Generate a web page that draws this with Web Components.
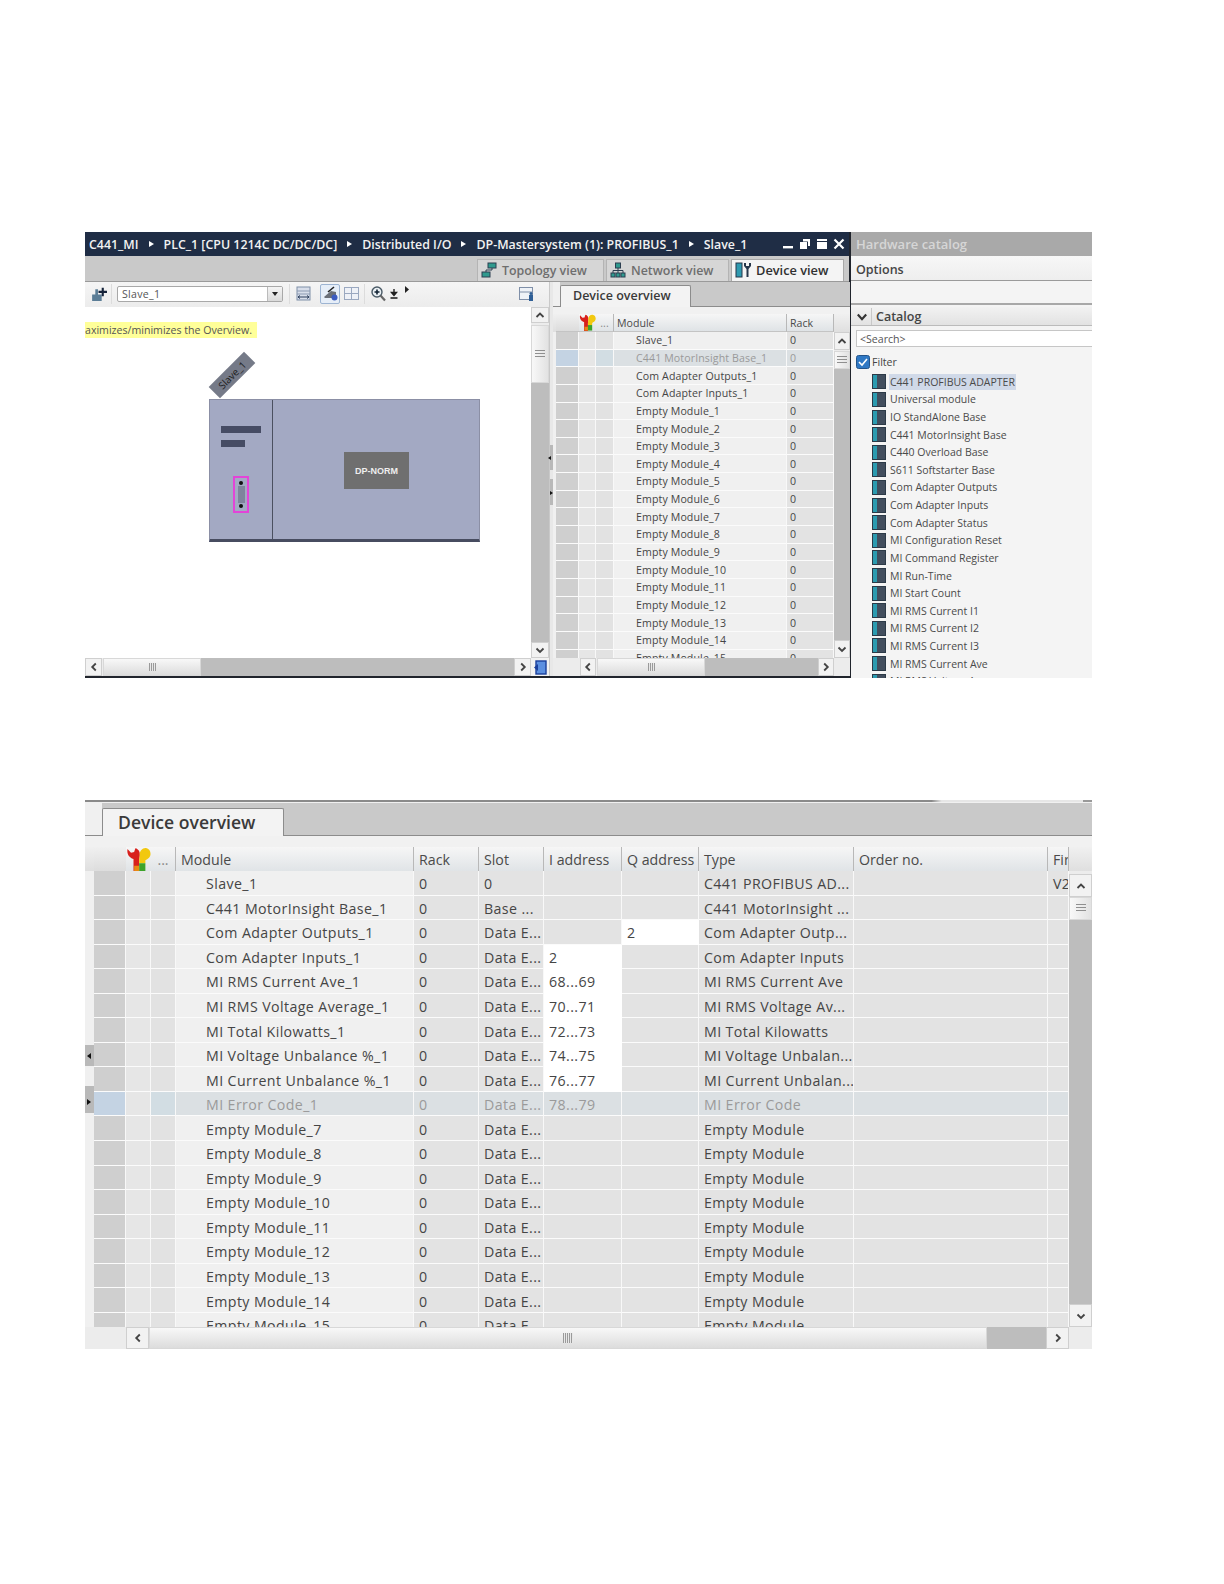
<!DOCTYPE html>
<html>
<head>
<meta charset="utf-8">
<title>Device overview</title>
<style>
    html, body { margin: 0; background: #fff; }
    body { padding: 232px 0 0 85px; height: 1352px; font-family: "Open Sans", "Liberation Sans", sans-serif; overflow: hidden; }
    tia-editor { margin-bottom: 122px; }
    device-table.small {
        --cols: 23px 17px 18px 173px 47px;
        --gutter: 3px;
        --tab-h: 25px; --strip-h: 7px; --head-h: 18px; --row-h: 17.65px; --foot-h: 18px;
        --body-h: 326px; --font: 10.6px; --head-font: 10.6px; --tab-font: 12.5px;
        --tab-left: 7px; --tab-w: 131px; --tab-top: 3px; --tab-pad: 12px; --indent: 22px; --pad: 3px; --spacing: .12px;
        --cell-top: 0px;
        --vbar: 16px;
        width: 297px;
    }
    device-table.large {
        --cols: 32px 25px 25px 238px 65px 65px 78px 77px 155px 194px 21px;
        --gutter: 9px;
        --tab-h: 33px; --strip-h: 11px; --head-h: 24px; --row-h: 24.55px; --foot-h: 22px;
        --body-h: 456px; --font: 14.2px; --head-font: 14.2px; --tab-font: 17.6px;
        --tab-left: 17px; --tab-w: 182px; --tab-top: 5px; --tab-pad: 15px; --indent: 30px; --pad: 5px; --spacing: .4px;
        --cell-top: 2px;
        --vbar: 23px;
        width: 1007px;
        border-top: 2px solid;
        border-image: linear-gradient(90deg, #8a8a8a 84%, #e6e6e6 85%, #e6e6e6 99%, #999 99%) 1;
        padding-top: 1px;
    }
</style>
</head>
<body>

<tia-editor>
    <device-table class="small" id="small" slot="overview">
        <device-row slot="head" header cells="|||Module|Rack"></device-row>
        <scroll-bar slot="vbar" orient="v" btn="18" offset="1" thumb="18" glyph="lines"></scroll-bar>
        <scroll-bar slot="hbar" orient="h" btn="16" pre="27" post="16" offset="1" thumb="108"></scroll-bar>
    </device-table>
</tia-editor>

<device-table class="large" id="large" handles>
    <device-row slot="head" header cells="|||Module|Rack|Slot|I address|Q address|Type|Order no.|Fir"></device-row>
    <scroll-bar slot="vbar" orient="v" btn="23" offset="0" thumb="23" lead="3" glyph="lines"></scroll-bar>
    <scroll-bar slot="hbar" orient="h" btn="23" pre="41" post="23" offset="0" thumb="838" glyph="long"></scroll-bar>
</device-table>

<script>
    let scrollTemplate = document.createElement('template');
    scrollTemplate.innerHTML = `
    <style>
        :host { display: flex; background: #ececec; }
        :host([orient=v]) { flex-direction: column; width: var(--vbar); flex: none; }
        :host([orient=h]) { height: 100%; flex: 1; }
        .pre, .post { flex: none; background: #ececec; }
        .bar { flex: 1; display: flex; min-width: 0; min-height: 0; }
        :host([orient=v]) .bar { flex-direction: column; }
        .btn { flex: none; display: flex; align-items: center; justify-content: center; background: #f2f2f2; box-sizing: border-box; border: 1px solid #cfcfcf; }
        .btn svg { width: 10px; height: 10px; }
        .thumb { flex: none; display: flex; align-items: center; justify-content: center; box-sizing: border-box; border: 1px solid #d8d8d8; }
        :host([orient=h]) .thumb { background: linear-gradient(#f8f8f8, #dcdcdc); }
        :host([orient=v]) .thumb { background: linear-gradient(90deg, #f8f8f8, #e2e2e2); }
        .track { flex: 1; background: #bdbdbd; }
        .grip { width: 7px; height: 8px; background: repeating-linear-gradient(90deg, #9a9a9a 0 1px, #e8e8e8 1px 2px); }
        :host([glyph=lines]) .grip { width: 10px; height: 9px; background: repeating-linear-gradient(#8f8f8f 0 1px, transparent 1px 3px); }
        :host([glyph=long]) .grip { width: 10px; height: 10px; }
    </style>
    <div class="pre"></div>
    <div class="bar">
        <div class="btn first"></div>
        <div class="offset"></div>
        <div class="thumb"><div class="grip"></div></div>
        <div class="track"></div>
        <div class="btn last"></div>
    </div>
    <div class="post"><slot></slot></div>
    `;

    let chevrons = {
        up: '<path d="M1.5 7 5 3.5 8.5 7"/>',
        down: '<path d="M1.5 3.5 5 7 8.5 3.5"/>',
        left: '<path d="M6.8 1.5 3.2 5 6.8 8.5"/>',
        right: '<path d="M3.2 1.5 6.8 5 3.2 8.5"/>'
    };
    let chevron = name => `<svg viewBox="0 0 10 10" fill="none" stroke="#444" stroke-width="1.8">${chevrons[name]}</svg>`;

    customElements.define('scroll-bar', class extends HTMLElement {
        constructor() {
            super();
            this.attachShadow({mode: 'open'}).appendChild(scrollTemplate.content.cloneNode(true));
        }

        connectedCallback() {
            let s = this.shadowRoot;
            let vertical = this.getAttribute('orient') == 'v';
            let size = vertical ? 'height' : 'width';
            let btn = this.getAttribute('btn') + 'px';
            s.querySelector('.first').style[size] = btn;
            s.querySelector('.last').style[size] = btn;
            s.querySelector('.first').innerHTML = chevron(vertical ? 'up' : 'left');
            s.querySelector('.last').innerHTML = chevron(vertical ? 'down' : 'right');
            s.querySelector('.offset').style[size] = this.getAttribute('offset') + 'px';
            s.querySelector('.thumb').style[size] = this.getAttribute('thumb') + 'px';
            s.querySelector('.pre').style[size] = (this.getAttribute('pre') || this.getAttribute('lead') || 0) + 'px';
            s.querySelector('.post').style[size] = (this.getAttribute('post') || 0) + 'px';
        }
    });

    let rowTemplate = document.createElement('template');
    rowTemplate.innerHTML = `
    <style>
        :host { display: grid; grid-template-columns: var(--cols); height: var(--row-h); font-size: var(--font); letter-spacing: var(--spacing); color: #454545; }
        :host([header]) { height: var(--head-h); font-size: var(--head-font); letter-spacing: 0; color: #4a4a4a; flex: 1; }
        .cell { box-sizing: border-box; background: #e3e3e3; border-right: 1px solid #f8f8f8; border-bottom: 1px solid #fbfbfb; padding-left: var(--pad); padding-top: var(--cell-top); white-space: nowrap; overflow: hidden; display: flex; align-items: center; min-width: 0; }
        .c0 { background: #cfcfcf; padding-left: 0; }
        .c1 { background: #e6e6e6; padding-left: 0; }
        .c2 { background: #e2e2e2; padding-left: 0; }
        .c3 { background: #f0f0f0; padding-left: var(--indent); }
        .edit { background: #fff; border-right-color: #fff; border-bottom-color: #fff; }
        :host([selected]) { color: #9a9a9a; }
        :host([selected]) .cell { background: #dbe0e3; }
        :host([selected]) .c0 { background: #c4d3e3; }
        :host([selected]) .c1 { background: #e6e6e6; }
        :host([selected]) .c2 { background: #d2dde3; }
        :host([header]) .cell { background: linear-gradient(#f6f6f6, #dfe3e6); border-right: 1px solid #b8b8b8; border-bottom: 1px solid #c4c4c4; padding-top: 0; }
        :host([header]) .c0 { background: linear-gradient(#f0f0f0, #dcdcdc); border-right: 0; }
        :host([header]) .c1 { border-right: 0; justify-content: center; overflow: visible; }
        :host([header]) .c2 { justify-content: center; color: #888; }
        :host([header]) .c3 { padding-left: var(--pad); }
        .wrench { height: 100%; width: auto; flex: none; }
    </style>
    `;

    customElements.define('device-row', class extends HTMLElement {
        constructor() {
            super();
            this.attachShadow({mode: 'open'}).appendChild(rowTemplate.content.cloneNode(true));
        }

        connectedCallback() {
            let header = this.hasAttribute('header');
            this.getAttribute('cells').split('|').forEach((text, i) => {
                let cell = document.createElement('div');
                cell.className = 'cell c' + i;
                if (text[0] == '*') {
                    cell.classList.add('edit');
                    text = text.slice(1);
                }
                cell.textContent = text;
                if (header && i == 1) {
                    cell.innerHTML = `<svg class="wrench" viewBox="0 0 20 20">
                        <path d="M6 20V9.5C2.5 8.5 .5 5.5 1.2 1.5L4 4.5 6.5 4 7.5 1C10 1.5 11.5 4 11 7L10.5 11V20Z" fill="#d8201c"/>
                        <path d="M10.5 11 11 7C10.5 3.5 13 .5 16 .8 19 1.2 20.3 4.5 19.3 7.2 18.6 9 17 9.8 15.5 10.5V13H10.5Z" fill="#f2c80f"/>
                        <path d="M10.5 13H15.5V19.5H10.5Z" fill="#3da32a"/>
                        <path d="M6.5 15H10.5V19.5H6.5Z" fill="#e88a12"/>
                    </svg>`;
                }
                if (header && i == 2) cell.textContent = '...';
                this.shadowRoot.appendChild(cell);
            });
        }
    });

    let tableTemplate = document.createElement('template');
    tableTemplate.innerHTML = `
    <style>
        :host { display: block; position: relative; font-family: "Open Sans", "Liberation Sans", sans-serif; background: #f0f0f0; flex: none; }
        .tabs { height: var(--tab-h); box-sizing: border-box; padding-left: var(--tab-left); padding-top: var(--tab-top); background: linear-gradient(90deg, #f0f0f0 var(--tab-left), #c9c9c9 var(--tab-left)); border-bottom: 1px solid #8c8c8c; display: flex; }
        .tab { width: var(--tab-w); box-sizing: border-box; margin-bottom: -1px; background: #f3f3f3; border: 1px solid #8c8c8c; border-bottom: 0; border-radius: 2px 2px 0 0; font-size: var(--tab-font); font-weight: 600; color: #3a3a3a; display: flex; align-items: center; padding: 0 0 2px var(--tab-pad); }
        .strip { height: var(--strip-h); background: #f1f1f1; }
        .head { display: flex; height: var(--head-h); padding-left: var(--gutter); background: linear-gradient(#f0f0f0, #dfdfdf); }
        .body { display: flex; height: var(--body-h); padding-left: var(--gutter); }
        .rows { flex: 1; overflow: hidden; min-width: 0; }
        .foot { display: flex; height: var(--foot-h); }
        .handle { display: none; position: absolute; left: 0; width: 9px; background: #b9b9b9; }
        :host([handles]) .handle { display: block; }
        .handle::after { content: ""; position: absolute; left: 2px; border: 3.5px solid transparent; }
        .h1 { top: 243px; height: 21px; }
        .h1::after { top: 8px; left: -1px; border-right: 4px solid #111; }
        .h2 { top: 284px; height: 27px; }
        .h2::after { top: 13px; left: 2px; border-left: 4px solid #111; }
    </style>
    <div class="tabs"><div class="tab">Device overview</div></div>
    <div class="strip"></div>
    <div class="head"><slot name="head"></slot></div>
    <div class="body">
        <div class="rows"><slot></slot></div>
        <slot name="vbar"></slot>
    </div>
    <div class="foot"><slot name="hbar"></slot></div>
    <div class="handle h1"></div>
    <div class="handle h2"></div>
    `;

    customElements.define('device-table', class extends HTMLElement {
        constructor() {
            super();
            this.attachShadow({mode: 'open'}).appendChild(tableTemplate.content.cloneNode(true));
        }
    });

    let tabTemplate = document.createElement('template');
    tabTemplate.innerHTML = `
    <style>
        :host { display: flex; align-items: center; gap: 5px; box-sizing: border-box; height: 22px; padding: 0 6px 1px 3px; background: #d6d6d6; border: 1px solid #b4b4b4; border-bottom: 0; font-size: 12.4px; font-weight: 600; color: #6e6e6e; }
        :host([active]) { background: #f4f4f4; color: #303030; border-color: #a8a8a8; font-size: 12.8px; }
        ::slotted(svg) { width: 16px; height: 16px; flex: none; }
    </style>
    <slot name="icon"></slot><slot></slot>
    `;

    customElements.define('view-tab', class extends HTMLElement {
        constructor() {
            super();
            this.attachShadow({mode: 'open'}).appendChild(tabTemplate.content.cloneNode(true));
        }
    });

    let itemTemplate = document.createElement('template');
    itemTemplate.innerHTML = `
    <style>
        :host { display: flex; align-items: center; height: 17.62px; padding-left: 21px; flex: none; font-size: 10.5px; letter-spacing: 0; color: #4a4a4a; white-space: nowrap; }
        .icon { width: 14px; height: 15px; flex: none; box-sizing: border-box; border: 1px solid #2c3a48; background: linear-gradient(90deg, #2b9bb0 0 34%, #424e5e 34%); margin-right: 3px; }
        .label { padding: 1px 1px; }
        :host([selected]) .label { background: #d0d9e8; }
    </style>
    <div class="icon"></div><span class="label"><slot></slot></span>
    `;

    customElements.define('catalog-item', class extends HTMLElement {
        constructor() {
            super();
            this.attachShadow({mode: 'open'}).appendChild(itemTemplate.content.cloneNode(true));
        }
    });

    let catalogTemplate = document.createElement('template');
    catalogTemplate.innerHTML = `
    <style>
        :host { display: flex; flex-direction: column; width: 241px; height: 446px; overflow: hidden; background: #f4f4f4; flex: none; font-family: "Open Sans", "Liberation Sans", sans-serif; }
        .title { height: 24px; flex: none; background: #a9a9a9; color: #d6d6d6; font-size: 13px; font-weight: 600; display: flex; align-items: center; padding-left: 5px; }
        .options { height: 25px; flex: none; box-sizing: border-box; background: linear-gradient(#f7f7f7, #eeeeee); border-bottom: 1px solid #9a9a9a; font-size: 12.5px; font-weight: 600; color: #444; display: flex; align-items: center; padding: 3px 0 0 5px; }
        .blank { height: 24px; flex: none; box-sizing: border-box; border-bottom: 2px solid #a8a8a8; }
        .head { height: 19px; margin-top: 2px; flex: none; display: flex; align-items: center; box-sizing: border-box; background: linear-gradient(#f2f2f2, #e2e2e2); border-bottom: 1px solid #bbb; font-size: 12.5px; font-weight: 600; color: #444; padding-top: 1px; }
        .head svg { width: 12px; height: 12px; margin: 0 3px 0 5px; }
        .head span { border-left: 1px solid #c8c8c8; padding-left: 4px; line-height: 17px; }
        .search { height: 17px; flex: none; margin: 4px 0 0 5px; box-sizing: border-box; background: #fff; border: 1px solid #c6c6c6; border-right: 0; font-size: 10.6px; color: #555; padding-left: 3px; display: flex; align-items: center; }
        .filter { height: 17px; flex: none; margin: 6px 0 3px 5px; display: flex; align-items: center; gap: 2px; font-size: 10.6px; color: #444; }
        .filter svg { width: 14px; height: 14px; }
        .list { display: flex; flex-direction: column; }
    </style>
    <div class="title">Hardware catalog</div>
    <div class="options">Options</div>
    <div class="blank"></div>
    <div class="head"><svg viewBox="0 0 10 10" fill="none" stroke="#333" stroke-width="1.8"><path d="M1.5 3 5 6.8 8.5 3"/></svg><span>Catalog</span></div>
    <div class="search">&lt;Search&gt;</div>
    <div class="filter">
        <svg viewBox="0 0 14 14"><rect x=".5" y=".5" width="13" height="13" rx="2" fill="#2f78c4" stroke="#24548a"/><path d="M3 7 6 10 11 4" fill="none" stroke="#fff" stroke-width="1.6"/></svg>
        Filter
    </div>
    <div class="list"><slot></slot></div>
    `;

    customElements.define('hardware-catalog', class extends HTMLElement {
        constructor() {
            super();
            this.attachShadow({mode: 'open'}).appendChild(catalogTemplate.content.cloneNode(true));
            ['C441 PROFIBUS ADAPTER', 'Universal module', 'IO StandAlone Base', 'C441 MotorInsight Base', 'C440 Overload Base',
                'S611 Softstarter Base', 'Com Adapter Outputs', 'Com Adapter Inputs', 'Com Adapter Status', 'MI Configuration Reset',
                'MI Command Register', 'MI Run-Time', 'MI Start Count', 'MI RMS Current I1', 'MI RMS Current I2', 'MI RMS Current I3',
                'MI RMS Current Ave', 'MI RMS Voltage Average'].forEach((name, i) => {
                let item = document.createElement('catalog-item');
                item.textContent = name;
                if (i == 0) item.setAttribute('selected', '');
                this.appendChild(item);
            });
        }
    });

    let canvasTemplate = document.createElement('template');
    canvasTemplate.innerHTML = `
    <style>
        :host { display: block; position: relative; flex: 1; background: #fff; overflow: hidden; font-family: "Open Sans", "Liberation Sans", sans-serif; }
        .tip { position: absolute; left: 0; top: 15px; width: 172px; height: 16px; background: #ffff99; color: #555; font-size: 10.6px; line-height: 16px; white-space: nowrap; overflow: hidden; box-sizing: border-box; padding-left: 0; }
        .tag { position: absolute; left: 122px; top: 60px; width: 50px; height: 16px; transform: rotate(-45deg); background: #757a88; color: #1c1c1c; font-size: 10px; line-height: 16px; text-align: center; }
        .device { position: absolute; left: 124px; top: 92px; width: 271px; height: 143px; box-sizing: border-box; background: #a3a9c3; border: 1px solid #8b8fa5; border-bottom: 3px solid #474c60; }
        .split { position: absolute; left: 62px; top: 0; bottom: 0; width: 1px; background: #4b5060; }
        .bar { position: absolute; left: 11px; height: 7px; background: #464c64; }
        .plate { position: absolute; left: 134px; top: 52px; width: 65px; height: 37px; background: #6f6f6f; color: #eee; font: bold 9px "Liberation Sans", sans-serif; display: flex; align-items: center; justify-content: center; }
        .port { position: absolute; left: 23px; top: 76px; width: 16px; height: 37px; box-sizing: border-box; border: 2px solid #e344d8; background: #a3a9c3; }
        .port::before { content: ""; position: absolute; left: 2.5px; top: 8px; width: 7px; height: 17px; background: #7f849c; }
        .pin { position: absolute; left: 4px; width: 4px; height: 4px; border-radius: 2px; background: #111; }
    </style>
    <div class="tip">aximizes/minimizes the Overview.</div>
    <div class="tag">Slave_1</div>
    <div class="device">
        <div class="split"></div>
        <div class="bar" style="top: 26px; width: 40px"></div>
        <div class="bar" style="top: 40px; width: 24px"></div>
        <div class="plate">DP-NORM</div>
        <div class="port"><div class="pin" style="top: 3px"></div><div class="pin" style="bottom: 3px"></div></div>
    </div>
    `;

    customElements.define('device-canvas', class extends HTMLElement {
        constructor() {
            super();
            this.attachShadow({mode: 'open'}).appendChild(canvasTemplate.content.cloneNode(true));
        }
    });

    let toolbarTemplate = document.createElement('template');
    toolbarTemplate.innerHTML = `
    <style>
        :host { display: flex; align-items: center; height: 25px; flex: none; box-sizing: border-box; background: linear-gradient(#f5f5f5, #ececec); padding: 0 0 2px 5px; font-family: "Open Sans", "Liberation Sans", sans-serif; }
        svg { flex: none; display: block; }
        .sep { width: 1px; height: 20px; background: #dcdcdc; margin: 0 5px; flex: none; }
        .combo { width: 166px; height: 16px; box-sizing: border-box; border: 1px solid #a8a8a8; border-radius: 2px; background: #fff; font-size: 10.6px; letter-spacing: .3px; color: #555; display: flex; align-items: center; justify-content: space-between; padding-left: 4px; flex: none; }
        .arrow { width: 14px; height: 100%; background: linear-gradient(#f4f4f4, #dadada); border-left: 1px solid #bbb; display: flex; align-items: center; justify-content: center; }
        .arrow i { border: 3px solid transparent; border-top: 4px solid #222; border-bottom: 0; }
        .on { width: 20px; height: 20px; box-sizing: border-box; border: 1px solid #9db4d2; border-radius: 2px; background: #e6eef8; display: flex; align-items: center; justify-content: center; margin: 0 4px 0 9px; flex: none; }
        .push { margin-left: auto; margin-right: 15px; }
    </style>
    <svg width="17" height="17" viewBox="0 0 16 16"><path d="M2 15V9H5V4H7.5V9H11V15Z" fill="#5b7d96"/><path d="M8 6.5H16M12 2.5V10.5" stroke="#16233a" stroke-width="2"/></svg>
    <div class="sep" style="margin: 0 5px 0 4px"></div>
    <div class="combo">Slave_1<div class="arrow"><i></i></div></div>
    <div class="sep" style="margin: 0 6px"></div>
    <svg width="15" height="15" viewBox="0 0 15 15"><rect x="1" y="1" width="13" height="13" fill="#d8deea" stroke="#7f8fa8"/><path d="M1 5H14M1 8H14" stroke="#8c9ab2"/><path d="M2 11H13M2 11 4 9.5M2 11 4 12.5M13 11 11 9.5M13 11 11 12.5" stroke="#2c3e5c" fill="none"/></svg>
    <div class="on"><svg width="15" height="15" viewBox="0 0 15 15"><path d="M1 11 8 5 13 6V12H2Z" fill="#6a6f78"/><path d="M5 6 11 1" stroke="#222" stroke-width="1.6"/><circle cx="11.5" cy="11.5" r="3" fill="#3b5bc0"/></svg></div>
    <svg width="15" height="15" viewBox="0 0 15 15"><rect x=".5" y="1.5" width="14" height="12" fill="#eef1f7" stroke="#9aa8c0"/><path d="M7.5 1.5V13.5M.5 7.5H14.5" stroke="#9aa8c0"/></svg>
    <div class="sep" style="margin: 0 6px 0 5px"></div>
    <svg width="15" height="16" viewBox="0 0 15 16"><circle cx="6" cy="6" r="5" fill="#eaf0f4" stroke="#4a5a66" stroke-width="1.4"/><path d="M3.5 6H8.5M6 3.5V8.5" stroke="#123" stroke-width="1.6"/><path d="M9.5 9.5 14 14.5" stroke="#666" stroke-width="2.2"/></svg>
    <svg style="margin-left: 3px" width="10" height="12" viewBox="0 0 10 12"><path d="M5 1V6M2.5 4.5 5 7.5 7.5 4.5Z" stroke="#222" stroke-width="1.4" fill="#222"/><path d="M1.5 10H8.5" stroke="#222" stroke-width="1.6"/></svg>
    <svg style="margin: -8px 0 0 6px" width="4" height="7" viewBox="0 0 4 7"><path d="M0 0 4 3.5 0 7Z" fill="#222"/></svg>
    <svg class="push" width="15" height="16" viewBox="0 0 15 16"><rect x=".5" y="1.5" width="13" height="12" fill="#eef2f7" stroke="#7f8fa8"/><path d="M1 6H13" stroke="#7f8fa8"/><rect x="10" y="9" width="4" height="6" fill="#2f5f96"/><circle cx="12" cy="7.5" r="1.5" fill="#2f5f96"/></svg>
    `;

    customElements.define('tia-toolbar', class extends HTMLElement {
        constructor() {
            super();
            this.attachShadow({mode: 'open'}).appendChild(toolbarTemplate.content.cloneNode(true));
        }
    });

    let editorTemplate = document.createElement('template');
    editorTemplate.innerHTML = `
    <style>
        :host { display: flex; width: 1007px; height: 446px; font-family: "Open Sans", "Liberation Sans", sans-serif; }
        .editor { width: 766px; flex: none; box-sizing: border-box; display: flex; flex-direction: column; border-right: 2px solid #20242c; border-bottom: 2px solid #20242c; background: #f0f0f0; }
        .title { height: 24px; flex: none; background: #1f2d45; color: #f2f2f2; font-size: 12.4px; font-weight: 600; display: flex; align-items: center; padding-left: 4px; white-space: nowrap; }
        .title i { border: 3.5px solid transparent; border-left: 5px solid #fff; border-right: 0; margin: 0 10px; }
        .win { margin-left: auto; display: flex; gap: 5px; padding-right: 4px; align-items: center; }
        .win svg { width: 12px; height: 12px; display: block; }
        .views { height: 26px; flex: none; box-sizing: border-box; background: #c9c9c9; border-bottom: 1px solid #9a9a9a; display: flex; align-items: flex-end; gap: 2px; padding-left: 392px; }
        .views view-tab:nth-of-type(1) { width: 127px; }
        .views view-tab:nth-of-type(2) { width: 123px; }
        .views view-tab:nth-of-type(3) { width: 113px; }
        .work { flex: 1; display: flex; min-height: 0; }
        .left { width: 464px; flex: none; display: flex; flex-direction: column; }
        .mid { flex: 1; display: flex; min-height: 0; }
        .bottom { height: 18px; flex: none; display: flex; }
        .corner { width: 18px; height: 18px; background: #f2f2f2; flex: none; display: flex; align-items: center; justify-content: center; }
        .gutter { width: 4px; flex: none; background: #e8e8e8; border-left: 1px solid #c9c9c9; box-sizing: border-box; position: relative; }
        .gutter b { position: absolute; left: 0; width: 3px; background: #b9b9b9; }
        .gutter b::after { content: ""; position: absolute; left: 0; top: 45%; border: 2.5px solid transparent; }
        .gutter .l::after { left: -2px; border-right: 3px solid #111; border-left: 0; }
        .gutter .r::after { border-left: 3px solid #111; border-right: 0; }
        ::slotted(device-table) { flex: none; }
    </style>
    <div class="editor">
        <div class="title">C441_MI<i></i>PLC_1 [CPU 1214C DC/DC/DC]<i></i>Distributed I/O<i></i>DP-Mastersystem (1): PROFIBUS_1<i></i>Slave_1
            <div class="win">
                <svg viewBox="0 0 12 12"><rect x="1" y="8" width="10" height="2.4" fill="#fff"/></svg>
                <svg viewBox="0 0 12 12"><path d="M4 1H11V8H9V3.5H4ZM1 4H8V11H1Z" fill="#fff"/></svg>
                <svg viewBox="0 0 12 12"><path d="M1 1H11V3H1ZM1 4H11V11H1Z" fill="#fff"/></svg>
                <svg viewBox="0 0 12 12"><path d="M1.5 1.5 10.5 10.5M10.5 1.5 1.5 10.5" stroke="#fff" stroke-width="2.2"/></svg>
            </div>
        </div>
        <div class="views">
            <view-tab><svg slot="icon" viewBox="0 0 16 16"><rect x="7" y="1" width="8" height="5" fill="#2f9a8e" stroke="#2c3e50"/><rect x="1" y="10" width="8" height="5" fill="#2f9a8e" stroke="#2c3e50"/><path d="M11 6V8H5V10" fill="none" stroke="#2c3e50"/></svg>Topology view</view-tab>
            <view-tab><svg slot="icon" viewBox="0 0 16 16"><rect x="5.5" y="1" width="5" height="5" fill="#2f9a8e" stroke="#2c3e50"/><rect x="1" y="11" width="4" height="4" fill="#2f9a8e" stroke="#2c3e50"/><rect x="6" y="11" width="4" height="4" fill="#2f9a8e" stroke="#2c3e50"/><rect x="11" y="11" width="4" height="4" fill="#2f9a8e" stroke="#2c3e50"/><path d="M8 6V11M3 11V8.5H13V11" fill="none" stroke="#2c3e50"/></svg>Network view</view-tab>
            <view-tab active><svg slot="icon" viewBox="0 0 16 16"><rect x="1" y="1" width="6" height="14" fill="#2f9ab0" stroke="#26364a"/><path d="M9 1V4L11.5 7V15H13.5V7L16 4V1L14 1V4H11V1Z" fill="#26364a"/></svg>Device view</view-tab>
        </div>
        <div class="work">
            <div class="left">
                <tia-toolbar></tia-toolbar>
                <div class="mid">
                    <device-canvas></device-canvas>
                    <scroll-bar orient="v" btn="16" offset="2" thumb="58" glyph="lines" style="--vbar: 18px"></scroll-bar>
                </div>
                <div class="bottom">
                    <scroll-bar orient="h" btn="17" offset="1" thumb="98"></scroll-bar>
                    <div class="corner"><svg width="14" height="15" viewBox="0 0 14 15"><rect x="3" y="1" width="10" height="13" fill="#5b8fe0" stroke="#1a3f9c" stroke-width="1.4"/><path d="M1 7.5 5 4V11Z" fill="#1a3f9c"/></svg></div>
                </div>
            </div>
            <div class="gutter"><b class="l" style="top: 163px; height: 25px"></b><b class="r" style="top: 197px; height: 26px"></b></div>
            <slot name="overview"></slot>
        </div>
    </div>
    <hardware-catalog></hardware-catalog>
    `;

    customElements.define('tia-editor', class extends HTMLElement {
        constructor() {
            super();
            this.attachShadow({mode: 'open'}).appendChild(editorTemplate.content.cloneNode(true));
        }
    });

    let addRows = (table, rows) => rows.forEach(r => {
        let row = document.createElement('device-row');
        row.setAttribute('cells', r.cells);
        if (r.selected) row.setAttribute('selected', '');
        table.appendChild(row);
    });

    let names = ['Slave_1', 'C441 MotorInsight Base_1', 'Com Adapter Outputs_1', 'Com Adapter Inputs_1'];
    for (let i = 1; i <= 15; i++) names.push('Empty Module_' + i);
    addRows(document.getElementById('small'), names.map((n, i) => ({cells: `|||${n}|0`, selected: i == 1})));

    let large = [
        ['Slave_1', '0', '', '', 'C441 PROFIBUS AD...', 'V2'],
        ['C441 MotorInsight Base_1', 'Base ...', '', '', 'C441 MotorInsight ...'],
        ['Com Adapter Outputs_1', 'Data E...', '', '*2', 'Com Adapter Outp...'],
        ['Com Adapter Inputs_1', 'Data E...', '*2', '', 'Com Adapter Inputs'],
        ['MI RMS Current Ave_1', 'Data E...', '*68...69', '', 'MI RMS Current Ave'],
        ['MI RMS Voltage Average_1', 'Data E...', '*70...71', '', 'MI RMS Voltage Av...'],
        ['MI Total Kilowatts_1', 'Data E...', '*72...73', '', 'MI Total Kilowatts'],
        ['MI Voltage Unbalance %_1', 'Data E...', '*74...75', '', 'MI Voltage Unbalan...'],
        ['MI Current Unbalance %_1', 'Data E...', '*76...77', '', 'MI Current Unbalan...'],
        ['MI Error Code_1', 'Data E...', '78...79', '', 'MI Error Code']
    ];
    for (let i = 7; i <= 15; i++) large.push(['Empty Module_' + i, 'Data E...', '', '', 'Empty Module']);
    addRows(document.getElementById('large'), large.map((r, i) => ({
        cells: `|||${r[0]}|0|${r[1]}|${r[2]}|${r[3]}|${r[4]}||${r[5] || ''}`,
        selected: i == 9
    })));
</script>
</body>
</html>
